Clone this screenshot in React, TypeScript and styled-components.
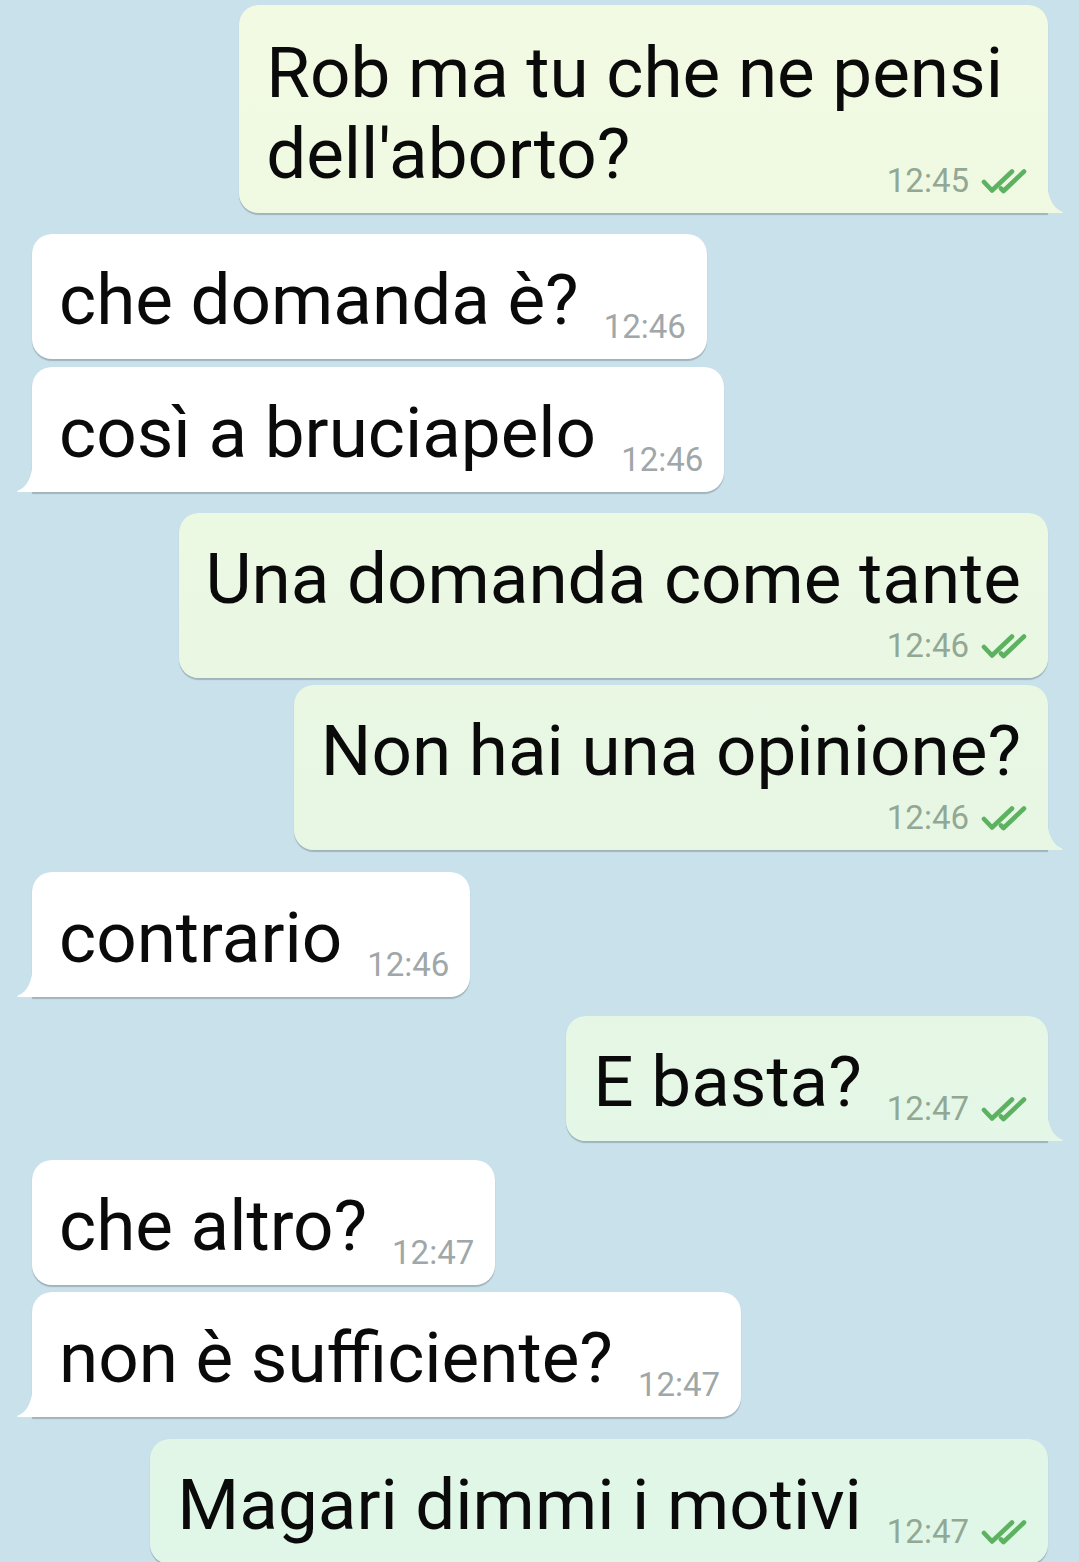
import styled, { createGlobalStyle, css } from "styled-components";

type Side = "in" | "out";
type MetaMode = "side" | "below";

const GlobalStyle = createGlobalStyle`
  html, body {
    margin: 0;
    padding: 0;
    height: 100%;
    overflow: hidden;
    background: #c9e1eb;
  }
  body {
    font-family: Roboto, "Noto Sans", "Liberation Sans", sans-serif;
  }
`;

const Chat = styled.main`
  display: flex;
  flex-direction: column;
  box-sizing: border-box;
  height: 1562px;
  overflow: hidden;
  padding: 5px 31px 0 32px;
`;

const outTail = css`
  border-bottom-right-radius: 0;
  &::after {
    content: "";
    position: absolute;
    right: -16px;
    bottom: 0;
    width: 17px;
    height: 30px;
    background: inherit;
    clip-path: path("M0 0 Q2 24 15 28.4 Q17 29.6 14.5 30 L0 30 Z");
  }
`;

const inTail = css`
  border-bottom-left-radius: 0;
  &::after {
    content: "";
    position: absolute;
    left: -16px;
    bottom: 0;
    width: 17px;
    height: 30px;
    background: inherit;
    clip-path: path("M17 0 Q15 24 2 28.4 Q0 29.6 2.5 30 L17 30 Z");
  }
`;

const Bubble = styled.div<{ $side: Side; $tail: boolean; $mode: MetaMode; $gap: number }>`
  position: relative;
  align-self: ${(p) => (p.$side === "out" ? "flex-end" : "flex-start")};
  margin-top: ${(p) => p.$gap}px;
  display: flex;
  flex-direction: column;
  box-sizing: border-box;
  padding: 25px ${(p) => (p.$mode === "below" ? 27 : 21)}px 16px 27px;
  border-radius: 20px;
  background: ${(p) =>
    p.$side === "out"
      ? "linear-gradient(180deg, #f2fae2 0%, #e8f7e3 50%, #e0f6e8 100%) fixed"
      : "#ffffff"};
  box-shadow: 0 1.5px 1px rgba(0, 0, 0, 0.2);
  ${(p) => p.$tail && (p.$side === "out" ? outTail : inTail)}
`;

// first lines of a wrapped message; keeps the room the wrap left on the right
const Lead = styled.div`
  margin-top: 2px;
  padding-right: 24px;
  font-size: 71px;
  line-height: 81px;
  color: #0a0a0a;
  white-space: nowrap;
`;

const Line = styled.div<{ $mode: MetaMode }>`
  display: flex;
  flex-direction: ${(p) => (p.$mode === "side" ? "row" : "column")};
  align-items: flex-end;
`;

const Text = styled.span<{ $mode: MetaMode }>`
  font-size: 71px;
  line-height: 81px;
  color: #0a0a0a;
  white-space: nowrap;
  margin-bottom: ${(p) => (p.$mode === "side" ? 3 : 0)}px;
  align-self: flex-start;
`;

const Meta = styled.span<{ $side: Side; $mode: MetaMode }>`
  display: flex;
  align-items: center;
  gap: 12px;
  flex-shrink: 0;
  font-size: 33px;
  line-height: 32px;
  white-space: nowrap;
  color: ${(p) => (p.$side === "out" ? "#92a895" : "#a0a7a9")};
  ${(p) =>
    p.$mode === "side"
      ? css`
          margin-left: auto;
          padding-left: 25px;
        `
      : css`
          margin-top: 11px;
          margin-right: -6px;
        `}
`;

const Ticks = () => (
  <svg width="46" height="25" viewBox="0 0 46 25" fill="none" stroke="#5db261" strokeWidth="4.6" strokeLinecap="round" strokeLinejoin="round">
    <path d="M3 13 L11 21.5 L31 2.5" />
    <path d="M20 19.5 L22.5 22 L43 2.5" />
  </svg>
);

type Message = {
  side: Side;
  lead?: string;
  text: string;
  time: string;
  mode: MetaMode;
  tail: boolean;
  gap: number;
};

const messages: Message[] = [
  { side: "out", lead: "Rob ma tu che ne pensi", text: "dell'aborto?", time: "12:45", mode: "side", tail: true, gap: 0 },
  { side: "in", text: "che domanda è?", time: "12:46", mode: "side", tail: false, gap: 21 },
  { side: "in", text: "così a bruciapelo", time: "12:46", mode: "side", tail: true, gap: 8 },
  { side: "out", text: "Una domanda come tante", time: "12:46", mode: "below", tail: false, gap: 21 },
  { side: "out", text: "Non hai una opinione?", time: "12:46", mode: "below", tail: true, gap: 7 },
  { side: "in", text: "contrario", time: "12:46", mode: "side", tail: true, gap: 22 },
  { side: "out", text: "E basta?", time: "12:47", mode: "side", tail: true, gap: 19 },
  { side: "in", text: "che altro?", time: "12:47", mode: "side", tail: false, gap: 19 },
  { side: "in", text: "non è sufficiente?", time: "12:47", mode: "side", tail: true, gap: 7 },
  { side: "out", text: "Magari dimmi i motivi", time: "12:47", mode: "side", tail: false, gap: 22 },
];

export default function App() {
  return (
    <>
      <GlobalStyle />
      <Chat>
        {messages.map((m, i) => (
          <Bubble key={i} $side={m.side} $tail={m.tail} $mode={m.mode} $gap={m.gap}>
            {m.lead && <Lead>{m.lead}</Lead>}
            <Line $mode={m.mode}>
              <Text $mode={m.mode}>{m.text}</Text>
              <Meta $side={m.side} $mode={m.mode}>
                {m.time}
                {m.side === "out" && <Ticks />}
              </Meta>
            </Line>
          </Bubble>
        ))}
      </Chat>
    </>
  );
}
